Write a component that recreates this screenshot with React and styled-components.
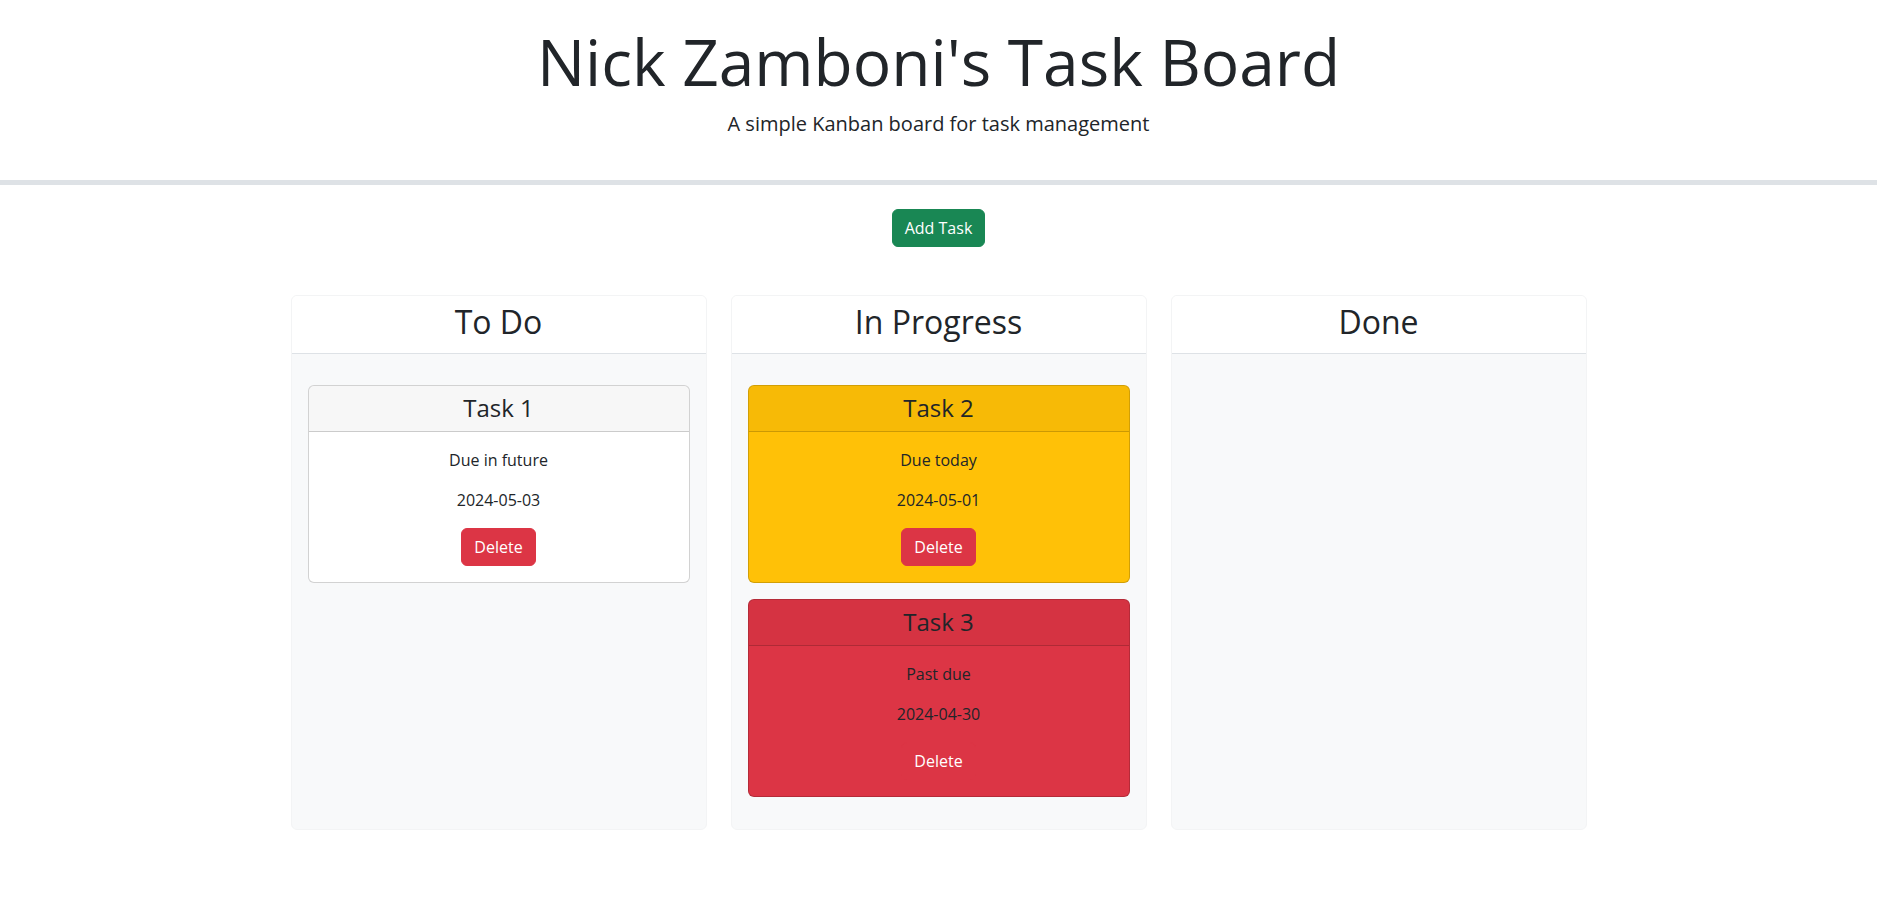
import React from "react";
import styled, { createGlobalStyle } from "styled-components";

const GlobalStyle = createGlobalStyle`
  html, body {
    margin: 0;
    padding: 0;
    background: #ffffff;
  }
  body {
    font-family: "Open Sans", "Noto Sans", sans-serif;
    font-size: 16px;
    line-height: 1.5;
    color: #212529;
  }
  * { box-sizing: border-box; }
`;

const Header = styled.header`
  text-align: center;
  padding: 24px 0 41px;
  border-bottom: 5px solid #dee2e6;
`;

const Title = styled.h1`
  margin: 0 0 8px;
  font-size: 64px;
  font-weight: 400;
  line-height: 1.2;
`;

const Lead = styled.p`
  margin: 0;
  font-size: 20px;
  font-weight: 400;
  line-height: 1.5;
`;

const Main = styled.main`
  width: 1320px;
  margin: 0 auto;
  padding: 24px 12px 0;
  display: flex;
  flex-direction: column;
  align-items: center;
`;

const Button = styled.button`
  font-family: inherit;
  font-size: 16px;
  line-height: 1.5;
  font-weight: 400;
  padding: 6px 12px;
  border-radius: 6px;
  border: 1px solid ${(p) => p.$bg};
  background: ${(p) => p.$bg};
  color: #ffffff;
  cursor: pointer;
`;

const Board = styled.div`
  margin-top: 48px;
  width: 100%;
  display: grid;
  grid-template-columns: repeat(3, 1fr);
  gap: 24px;
  align-items: stretch;
`;

const Lane = styled.section`
  display: flex;
  flex-direction: column;
  background: #f8f9fa;
  border: 1px solid #f3f4f5;
  border-radius: 6px;
  overflow: hidden;
`;

const LaneHeader = styled.div`
  background: #ffffff;
  padding: 7px 16px 12px;
  border-bottom: 1px solid #dee2e6;
  text-align: center;
`;

const LaneTitle = styled.h2`
  margin: 0;
  font-size: 32px;
  font-weight: 400;
  line-height: 1.2;
`;

const LaneBody = styled.div`
  flex: 1;
  padding: 31px 16px 32px;
  display: flex;
  flex-direction: column;
  gap: 16px;
`;

const TaskCard = styled.div`
  background: ${(p) => p.$bg};
  border: 1px solid rgba(0, 0, 0, 0.175);
  border-radius: 6px;
  overflow: hidden;
  text-align: center;
  color: #212529;
`;

const TaskHeader = styled.div`
  background: rgba(0, 0, 0, 0.03);
  padding: 8px 16px;
  border-bottom: 1px solid rgba(0, 0, 0, 0.175);
`;

const TaskTitle = styled.h3`
  margin: 0;
  font-size: 24px;
  font-weight: 400;
  line-height: 1.2;
`;

const TaskBody = styled.div`
  padding: 16px;
`;

const TaskText = styled.p`
  margin: 0 0 16px;
  font-size: 16px;
  line-height: 1.5;
`;

const COLORS = {
  future: "#ffffff",
  today: "#ffc107",
  past: "#dc3545",
};

const lanes = [
  {
    name: "To Do",
    tasks: [{ title: "Task 1", desc: "Due in future", date: "2024-05-03", status: "future" }],
  },
  {
    name: "In Progress",
    tasks: [
      { title: "Task 2", desc: "Due today", date: "2024-05-01", status: "today" },
      { title: "Task 3", desc: "Past due", date: "2024-04-30", status: "past" },
    ],
  },
  { name: "Done", tasks: [] },
];

export default function App() {
  return (
    <>
      <GlobalStyle />
      <Header>
        <Title>Nick Zamboni's Task Board</Title>
        <Lead>A simple Kanban board for task management</Lead>
      </Header>
      <Main>
        <Button $bg="#198754">Add Task</Button>
        <Board>
          {lanes.map((lane) => (
            <Lane key={lane.name}>
              <LaneHeader>
                <LaneTitle>{lane.name}</LaneTitle>
              </LaneHeader>
              <LaneBody>
                {lane.tasks.map((t) => (
                  <TaskCard key={t.title} $bg={COLORS[t.status]}>
                    <TaskHeader>
                      <TaskTitle>{t.title}</TaskTitle>
                    </TaskHeader>
                    <TaskBody>
                      <TaskText>{t.desc}</TaskText>
                      <TaskText>{t.date}</TaskText>
                      <Button $bg="#dc3545">Delete</Button>
                    </TaskBody>
                  </TaskCard>
                ))}
              </LaneBody>
            </Lane>
          ))}
        </Board>
      </Main>
    </>
  );
}
